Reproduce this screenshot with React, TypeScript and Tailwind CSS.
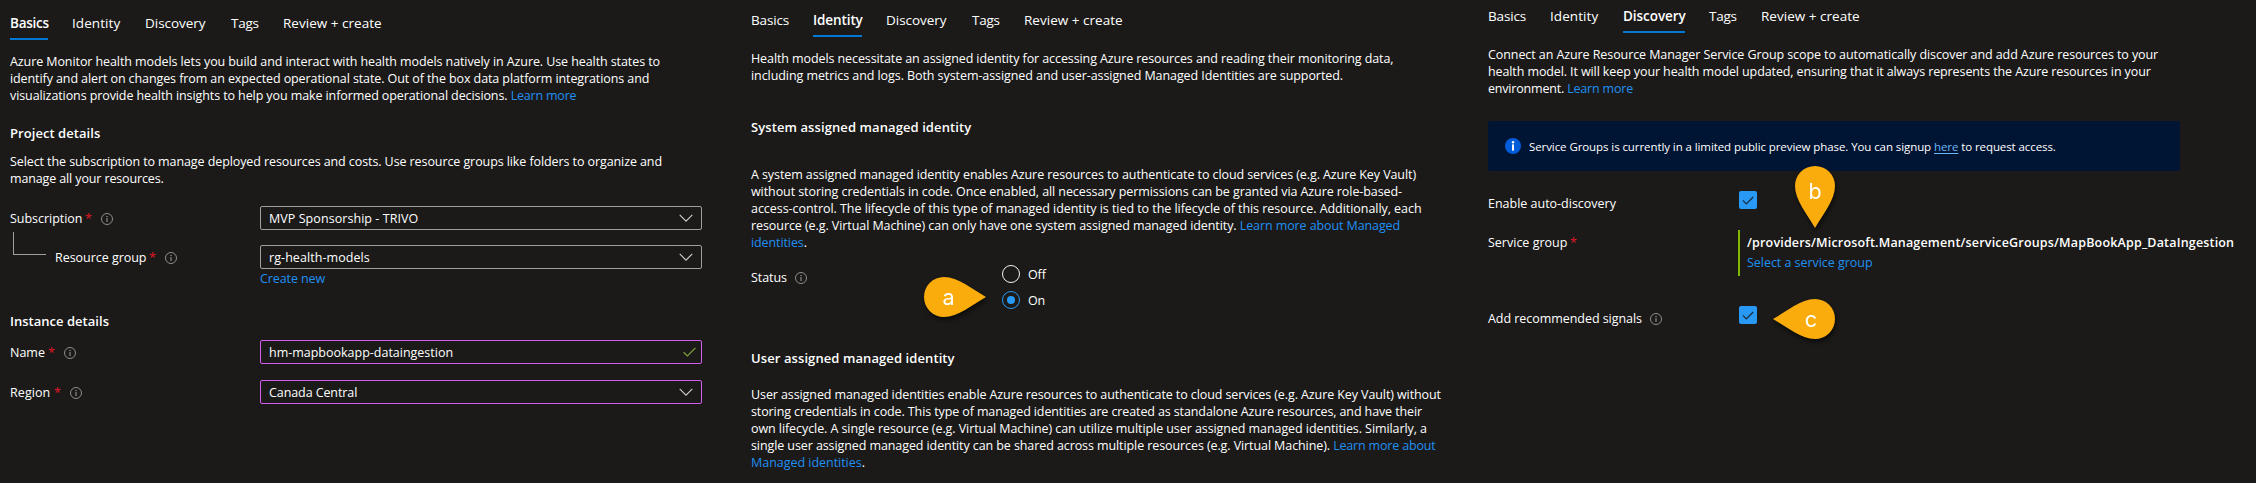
import type { ReactNode } from "react";

const BODY = "text-[12.5px] leading-[17px]";

function Tab({ label, active, tracking }: { label: string; active?: string; tracking: string }) {
  return (
    <div className="flex">
      <div
        className={`h-[26px] border-b-2 text-[13.5px] leading-[18px] whitespace-nowrap ${tracking} ${
          active ? `border-[#0078d4] font-semibold ${active}` : "border-transparent"
        }`}
      >
        {label}
      </div>
    </div>
  );
}

function Tabs({ current }: { current: "Basics" | "Identity" | "Discovery" }) {
  return (
    <nav className="grid grid-cols-[62px_73px_86px_52px_auto]">
      <Tab
        label="Basics"
        active={current === "Basics" ? "w-[38px]" : undefined}
        tracking={current === "Basics" ? "tracking-[-0.25px]" : "tracking-[-0.14px]"}
      />
      <Tab
        label="Identity"
        active={current === "Identity" ? "w-[49px]" : undefined}
        tracking={current === "Identity" ? "tracking-[-0.1px]" : "tracking-[0.08px]"}
      />
      <Tab
        label="Discovery"
        active={current === "Discovery" ? "w-[62px]" : undefined}
        tracking={current === "Discovery" ? "tracking-[-0.05px]" : "tracking-[-0.03px]"}
      />
      <Tab label="Tags" tracking="tracking-[-0.22px]" />
      <Tab label="Review + create" tracking="tracking-[0.02px]" />
    </nav>
  );
}

function Line({ className, children }: { className: string; children: ReactNode }) {
  return <div className={`whitespace-pre ${BODY} ${className}`}>{children}</div>;
}

function Link({ className = "", children }: { className?: string; children: ReactNode }) {
  return <a className={`text-[#2090f2] ${className}`}>{children}</a>;
}

function Heading({ className, children }: { className: string; children: ReactNode }) {
  return <h2 className={`text-[13px] leading-[18px] font-semibold whitespace-nowrap ${className}`}>{children}</h2>;
}

function InfoIcon() {
  return (
    <svg className="mt-[3px] h-3 w-3 shrink-0" viewBox="0 0 12 12" fill="none">
      <circle cx="6" cy="6" r="5.5" stroke="#8f8d8b" />
      <rect x="5.5" y="5" width="1" height="4" fill="#a19f9d" />
      <rect x="5.4" y="3" width="1.2" height="1.1" fill="#a19f9d" />
    </svg>
  );
}

function Star() {
  return <span className="w-4 shrink-0 text-[#e01625]">*</span>;
}

function FieldLabel({ text, width, required, info }: { text: string; width: string; required?: boolean; info?: boolean }) {
  return (
    <div className={`flex pt-1 ${BODY}`}>
      <span className={`shrink-0 whitespace-nowrap ${width}`}>{text}</span>
      {required && <Star />}
      {info && <InfoIcon />}
    </div>
  );
}

function Chevron() {
  return (
    <svg className="mr-2 h-[8px] w-[14px]" viewBox="0 0 14 8" fill="none">
      <path d="M0.7 0.8 L7 7.1 L13.3 0.8" stroke="#d2d0ce" strokeWidth="1.1" />
    </svg>
  );
}

function ValidMark() {
  return (
    <svg className="mr-[5px] h-[10px] w-[13px]" viewBox="0 0 13 10" fill="none">
      <path d="M0.6 5.2 L4.4 8.9 L12.4 0.9" stroke="#7fa23c" strokeWidth="1.2" />
    </svg>
  );
}

function Field({ value, valid, dirty, tracking }: { value: string; valid?: boolean; dirty?: boolean; tracking: string }) {
  return (
    <div
      className={`flex h-6 w-[442px] items-center justify-between rounded-[2px] border pl-2 ${BODY} ${
        dirty ? "border-[#d45fee]" : "border-[#a19f9d]"
      }`}
    >
      <span className={tracking}>{value}</span>
      {valid ? <ValidMark /> : <Chevron />}
    </div>
  );
}

function Radio({ label, checked }: { label: string; checked?: boolean }) {
  return (
    <div className={`flex ${BODY}`}>
      <span
        className={`mr-2 flex h-[18px] w-[18px] items-center justify-center rounded-full border ${
          checked ? "border-[#2899f5]" : "border-[#f3f2f1]"
        }`}
      >
        {checked && <span className="h-2 w-2 rounded-full bg-[#2899f5]" />}
      </span>
      <span className="pt-px tracking-[-0.1px]">{label}</span>
    </div>
  );
}

function Checkbox() {
  return (
    <span className="flex h-[18px] w-[18px] items-center justify-center rounded-[2px] bg-[#2899f5]">
      <svg className="h-[9px] w-3" viewBox="0 0 12 9" fill="none">
        <path d="M0.8 4.4 L4.3 7.9 L11.2 1" stroke="#1b2a38" strokeWidth="1.15" />
      </svg>
    </span>
  );
}

function Pin({ letter, className, rotate, tx, ty }: { letter: string; className: string; rotate: string; tx: number; ty: number }) {
  return (
    <svg
      className={`absolute h-[100px] w-[100px] overflow-visible drop-shadow-[1px_3px_2px_rgba(0,0,0,0.55)] ${className}`}
      viewBox="-50 -50 100 100"
    >
      <path transform={rotate} d="M42 0 C28 8 14 20 0 20 A20 20 0 0 1 0 -20 C14 -20 28 -8 42 0 Z" fill="#f9ac0b" />
      <text x={tx} y={ty} textAnchor="middle" fill="#fff" className="font-['Inter',sans-serif] text-[21.5px] font-normal">
        {letter}
      </text>
    </svg>
  );
}

function BasicsPanel() {
  return (
    <section className="pt-[14px] pl-[10px]">
      <Tabs current="Basics" />
      <div className="mt-[13px]">
        <Line className="tracking-[-0.087px]">
          Azure Monitor health models lets you build and interact with health models natively in Azure. Use health states to
        </Line>
        <Line className="tracking-[-0.094px]">
          identify and alert on changes from an expected operational state. Out of the box data platform integrations and
        </Line>
        <Line className="tracking-[-0.095px]">
          visualizations provide health insights to help you make informed operational decisions.{" "}
          <Link className="tracking-[-0.2px]">Learn more</Link>
        </Line>
      </div>
      <Heading className="mt-5 tracking-[0.06px]">Project details</Heading>
      <div className="mt-[11px]">
        <Line className="tracking-[-0.09px]">
          Select the subscription to manage deployed resources and costs. Use resource groups like folders to organize and
        </Line>
        <Line className="tracking-[-0.13px]">manage all your resources.</Line>
      </div>
      <div className="mt-[19px] grid grid-cols-[250px_442px]">
        <FieldLabel text="Subscription" width="w-[75px] tracking-[-0.03px]" required info />
        <Field value="MVP Sponsorship - TRIVO" tracking="tracking-[0.06px]" />
      </div>
      <div className="mt-[15px] grid h-6 grid-cols-[250px_442px]">
        <div className="flex">
          <span className="-mt-[13px] mr-[9px] ml-[3px] h-[23px] w-[33px] shrink-0 border-b border-l border-[#a19f9d]" />
          <FieldLabel text="Resource group" width="w-[94px] tracking-[-0.04px]" required info />
        </div>
        <Field value="rg-health-models" tracking="tracking-[0.07px]" />
      </div>
      <Line className="mt-px ml-[250px] tracking-[-0.09px]">
        <Link>Create new</Link>
      </Line>
      <Heading className="mt-[25px] tracking-[0.02px]">Instance details</Heading>
      <div className="mt-[10px] grid grid-cols-[250px_442px]">
        <FieldLabel text="Name" width="w-[38px]" required info />
        <Field value="hm-mapbookapp-dataingestion" valid dirty tracking="tracking-[-0.01px]" />
      </div>
      <div className="mt-4 grid grid-cols-[250px_442px]">
        <FieldLabel text="Region" width="w-[44px] tracking-[0.08px]" required info />
        <Field value="Canada Central" dirty tracking="tracking-[-0.09px]" />
      </div>
    </section>
  );
}

function IdentityPanel() {
  return (
    <section className="pt-[11px]">
      <Tabs current="Identity" />
      <div className="mt-[13px]">
        <Line className="tracking-[-0.095px]">
          Health models necessitate an assigned identity for accessing Azure resources and reading their monitoring data,
        </Line>
        <Line className="tracking-[-0.074px]">
          including metrics and logs. Both system-assigned and user-assigned Managed Identities are supported.
        </Line>
      </div>
      <Heading className="mt-[34px] tracking-[0.09px]">System assigned managed identity</Heading>
      <div className="mt-[30px]">
        <Line className="tracking-[-0.084px]">
          A system assigned managed identity enables Azure resources to authenticate to cloud services (e.g. Azure Key Vault)
        </Line>
        <Line className="tracking-[-0.078px]">
          without storing credentials in code. Once enabled, all necessary permissions can be granted via Azure role-based-
        </Line>
        <Line className="tracking-[-0.049px]">
          access-control. The lifecycle of this type of managed identity is tied to the lifecycle of this resource. Additionally, each
        </Line>
        <Line className="tracking-[-0.075px]">
          resource (e.g. Virtual Machine) can only have one system assigned managed identity.{" "}
          <Link className="tracking-[-0.1px]">Learn more about Managed</Link>
        </Line>
        <Line className="tracking-[-0.1px]">
          <Link>identities</Link>.
        </Line>
      </div>
      <div className="mt-[14px] grid grid-cols-[251px_auto]">
        <FieldLabel text="Status" width="w-[44px] tracking-[-0.08px]" info />
        <div className="flex flex-col gap-2">
          <Radio label="Off" />
          <Radio label="On" checked />
        </div>
      </div>
      <Heading className="mt-10 tracking-[0.09px]">User assigned managed identity</Heading>
      <div className="mt-[19px]">
        <Line className="tracking-[-0.094px]">
          User assigned managed identities enable Azure resources to authenticate to cloud services (e.g. Azure Key Vault) without
        </Line>
        <Line className="tracking-[-0.111px]">
          storing credentials in code. This type of managed identities are created as standalone Azure resources, and have their
        </Line>
        <Line className="tracking-[-0.076px]">
          own lifecycle. A single resource (e.g. Virtual Machine) can utilize multiple user assigned managed identities. Similarly, a
        </Line>
        <Line className="tracking-[-0.091px]">
          single user assigned managed identity can be shared across multiple resources (e.g. Virtual Machine).{" "}
          <Link className="tracking-[-0.17px]">Learn more about</Link>
        </Line>
        <Line className="tracking-[-0.03px]">
          <Link>Managed identities</Link>.
        </Line>
      </div>
    </section>
  );
}

function DiscoveryPanel() {
  return (
    <section className="pt-[7px]">
      <Tabs current="Discovery" />
      <div className="mt-[13px]">
        <Line className="tracking-[-0.083px]">
          Connect an Azure Resource Manager Service Group scope to automatically discover and add Azure resources to your
        </Line>
        <Line className="tracking-[-0.106px]">
          health model. It will keep your health model updated, ensuring that it always represents the Azure resources in your
        </Line>
        <Line className="tracking-[-0.19px]">
          environment. <Link>Learn more</Link>
        </Line>
      </div>
      <div className="mt-6 flex h-[50px] w-[692px] items-center rounded-[2px] bg-[#001433] pl-[17px]">
        <svg className="h-4 w-4 shrink-0" viewBox="0 0 16 16">
          <circle cx="8" cy="8" r="8" fill="#015cda" />
          <rect x="7" y="6.4" width="2" height="6.2" fill="#fff" />
          <circle cx="8" cy="4.2" r="1.2" fill="#fff" />
        </svg>
        <p className="ml-2 pt-px text-[11.5px] leading-[15px] tracking-[-0.085px] whitespace-pre">
          Service Groups is currently in a limited public preview phase. You can signup{" "}
          <a className="text-[#6cb8f6] underline underline-offset-2">here</a> to request access.
        </p>
      </div>
      <div className="mt-5 grid h-[18px] grid-cols-[251px_auto]">
        <FieldLabel text="Enable auto-discovery" width="w-[140px] tracking-[-0.01px]" />
        <Checkbox />
      </div>
      <div className="mt-[21px] grid h-[46px] grid-cols-[250px_auto]">
        <FieldLabel text="Service group" width="w-[82px]" required />
        <div className="border-l-2 border-[#7fba00] pt-1 pl-[7px]">
          <Line className="font-semibold tracking-[0.175px] text-white">
            /providers/Microsoft.Management/serviceGroups/MapBookApp_DataIngestion
          </Line>
          <Line className="mt-[3px] tracking-[-0.04px]">
            <Link>Select a service group</Link>
          </Line>
        </div>
      </div>
      <div className="mt-[30px] grid grid-cols-[251px_auto]">
        <FieldLabel text="Add recommended signals" width="w-[162px] tracking-[-0.05px]" info />
        <Checkbox />
      </div>
    </section>
  );
}

export default function App() {
  return (
    <main className="relative grid h-[483px] w-[2256px] grid-cols-[751px_737px_768px] overflow-hidden bg-[#1b1a19] font-['Open_Sans',sans-serif] text-white">
      <BasicsPanel />
      <IdentityPanel />
      <DiscoveryPanel />
      <Pin letter="a" className="top-[247px] left-[894px]" rotate="rotate(0)" tx={4.5} ty={8} />
      <Pin letter="b" className="top-[136px] left-[1765px]" rotate="rotate(90)" tx={0} ty={13} />
      <Pin letter="c" className="top-[269px] left-[1765px]" rotate="rotate(180)" tx={-4} ty={8} />
    </main>
  );
}
